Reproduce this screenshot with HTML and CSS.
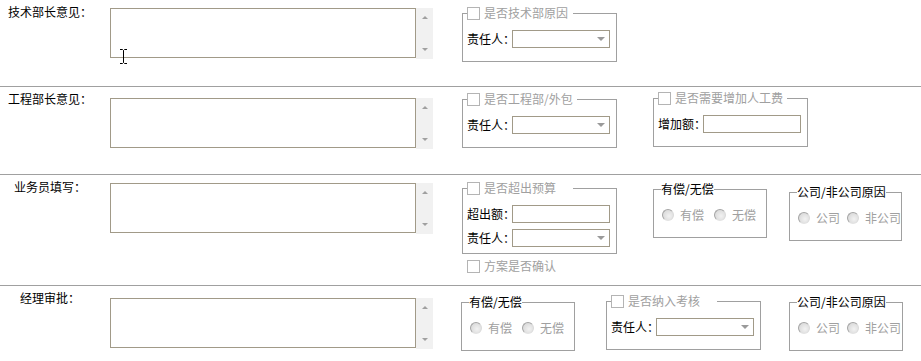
FILE: index.html
```html
<!DOCTYPE html>
<html lang="zh-CN">
<head>
    <meta charset="UTF-8">
    <title>审批意见</title>
    <link rel="stylesheet" href="styles.css">
</head>
<body>

    <!-- 技术部长 -->
    <div class="row r1">
        <div class="label">技术部长意见：</div>
        <div class="memo">
            <textarea></textarea>
            <div class="bar"><i class="up"></i><i class="down"></i></div>
        </div>
        <fieldset class="wide tech">
            <legend class="check"><label class="tick"><input type="checkbox" disabled>是否技术部原因</label></legend>
            <div class="line"><span class="key">责任人：</span><span class="pick"></span></div>
        </fieldset>
        <svg class="cursor" width="9" height="17" viewBox="0 0 9 17">
            <path d="M1 1.5H3.5L4.5 2.5L5.5 1.5H8M4.5 2.5V14.5M1 15.5H3.5L4.5 14.5L5.5 15.5H8" fill="none" stroke="#000" stroke-width="1"/>
        </svg>
    </div>

    <!-- 工程部长 -->
    <div class="row r2">
        <div class="label">工程部长意见：</div>
        <div class="memo">
            <textarea></textarea>
            <div class="bar"><i class="up"></i><i class="down"></i></div>
        </div>
        <fieldset class="wide eng">
            <legend class="check"><label class="tick"><input type="checkbox" disabled>是否工程部/外包</label></legend>
            <div class="line"><span class="key">责任人：</span><span class="pick"></span></div>
        </fieldset>
        <fieldset class="wide labor">
            <legend class="check"><label class="tick"><input type="checkbox" disabled>是否需要增加人工费</label></legend>
            <div class="line"><span class="key">增加额：</span><input class="field" type="text"></div>
        </fieldset>
    </div>

    <!-- 业务员 -->
    <div class="row r3">
        <div class="label">业务员填写：</div>
        <div class="memo">
            <textarea></textarea>
            <div class="bar"><i class="up"></i><i class="down"></i></div>
        </div>
        <div class="budget">
            <fieldset class="wide short">
                <legend class="check"><label class="tick"><input type="checkbox" disabled>是否超出预算</label></legend>
                <div class="line"><span class="key">超出额：</span><input class="field" type="text"></div>
                <div class="line"><span class="key">责任人：</span><span class="pick"></span></div>
            </fieldset>
            <label class="tick confirm"><input type="checkbox" disabled>方案是否确认</label>
        </div>
        <fieldset class="narrow pay">
            <legend class="plain">有偿/无偿</legend>
            <div class="opts">
                <label class="opt"><input type="radio" name="pay3" disabled>有偿</label>
                <label class="opt"><input type="radio" name="pay3" disabled>无偿</label>
            </div>
        </fieldset>
        <fieldset class="narrow cause">
            <legend class="plain">公司/非公司原因</legend>
            <div class="opts">
                <label class="opt"><input type="radio" name="cause3" disabled>公司</label>
                <label class="opt"><input type="radio" name="cause3" disabled>非公司</label>
            </div>
        </fieldset>
    </div>

    <!-- 经理 -->
    <div class="row r4">
        <div class="label">经理审批：</div>
        <div class="memo">
            <textarea></textarea>
            <div class="bar"><i class="up"></i><i class="down"></i></div>
        </div>
        <fieldset class="narrow pay">
            <legend class="plain">有偿/无偿</legend>
            <div class="opts">
                <label class="opt"><input type="radio" name="pay4" disabled>有偿</label>
                <label class="opt"><input type="radio" name="pay4" disabled>无偿</label>
            </div>
        </fieldset>
        <fieldset class="wide review">
            <legend class="check"><label class="tick"><input type="checkbox" disabled>是否纳入考核</label></legend>
            <div class="line"><span class="key">责任人：</span><span class="pick"></span></div>
        </fieldset>
        <fieldset class="narrow cause">
            <legend class="plain">公司/非公司原因</legend>
            <div class="opts">
                <label class="opt"><input type="radio" name="cause4" disabled>公司</label>
                <label class="opt"><input type="radio" name="cause4" disabled>非公司</label>
            </div>
        </fieldset>
    </div>

</body>
</html>
```
FILE: styles.css
```css
body {
    margin: 0;
    font-family: "Noto Sans CJK SC", "Noto Sans", sans-serif;
    font-size: 12px;
    line-height: 14px;
    color: #000;
    background: #fff;
}

/* rows */
.row {
    display: flex;
    align-items: flex-start;
    position: relative;
    border-bottom: 1px solid #a0a0a0;
}
.r1 { height: 86px; }
.r2 { height: 87px; }
.r3 { height: 110px; }
.r4 { height: 75px; border-bottom: none; }

.label {
    width: 100px;
    flex: none;
    margin-top: 5px;
    text-align: center;
    white-space: nowrap;
}

/* textarea + fake scrollbar */
.memo {
    display: flex;
    flex: none;
    margin-left: 10px;
}
.memo textarea {
    width: 306px;
    height: 50px;
    box-sizing: border-box;
    margin: 0;
    padding: 2px;
    border: 1px solid #a19a88;
    resize: none;
    outline: none;
    font: inherit;
    background: #fff;
}
.bar {
    width: 17px;
    height: 51px;
    box-sizing: border-box;
    padding: 8px 0 8px;
    background: #f1f1f1;
    display: flex;
    flex-direction: column;
    align-items: center;
    justify-content: space-between;
}
.bar i {
    display: block;
    width: 0;
    height: 0;
    border-left: 3px solid transparent;
    border-right: 3px solid transparent;
}
.bar .up { border-bottom: 3px solid #a0a0a0; }
.bar .down { border-top: 3px solid #a0a0a0; }

.r1 .memo { margin-top: 8px; }
.r2 .memo { margin-top: 11px; }
.r3 .memo { margin-top: 8px; }
.r4 .memo { margin-top: 12px; }

/* group boxes */
fieldset {
    flex: none;
    margin: 0;
    padding: 10px 4px 13px;
    border: 1px solid #a0a0a0;
    box-sizing: border-box;
    min-width: 0;
}
.wide { width: 155px; }
.narrow { width: 114px; padding-left: 8px; padding-right: 0; }

legend {
    padding: 0;
    height: 14px;
    line-height: 14px;
    font-size: 12px;
}
legend.check {
    min-width: 106px;
    box-sizing: border-box;
    padding-right: 4px;
    color: #a0a0a0;
}
legend.plain {
    margin-left: -1px;
    color: #000;
    white-space: nowrap;
}

.tick {
    display: flex;
    align-items: center;
    white-space: nowrap;
    color: #a0a0a0;
}
.tick input {
    appearance: none;
    width: 13px;
    height: 13px;
    margin: 0 4px 0 0;
    border: 1px solid #b4b4b4;
    background: #fff;
}

.line {
    display: flex;
    align-items: center;
    height: 18px;
}
.line + .line { margin-top: 6px; }
.key {
    width: 45px;
    flex: none;
    white-space: nowrap;
}
.field, .pick {
    width: 98px;
    height: 18px;
    box-sizing: border-box;
    margin: 0;
    border: 1px solid #a19a88;
    background: #fff;
}
.field {
    padding: 0 2px;
    font: inherit;
    outline: none;
}
.pick {
    display: flex;
    align-items: center;
    justify-content: flex-end;
    padding-right: 4px;
}
.pick::after {
    content: "";
    border-left: 4px solid transparent;
    border-right: 4px solid transparent;
    border-top: 4px solid #9a9a9a;
}

.opts {
    display: flex;
    align-items: center;
    height: 18px;
    gap: 10px;
}
.cause .opts { gap: 7px; }
.opt {
    display: flex;
    align-items: center;
    gap: 6px;
    color: #a0a0a0;
    white-space: nowrap;
}
.opt input {
    appearance: none;
    width: 12px;
    height: 12px;
    margin: 0;
    border-radius: 50%;
    border: 1px solid;
    border-color: #a4a4a4 #dadada #e2e2e2 #a4a4a4;
    background: radial-gradient(circle at 60% 60%, #f2f2f2, #d2d2d2);
}

.budget { flex: none; }
.confirm { margin: 5px 0 0 5px; line-height: 14px; }

/* placement of each box */
.tech { margin: 6px 0 0 29px; }
.eng { margin: 5px 0 0 29px; }
.labor { margin: 4px 0 0 36px; }

.budget { margin: 6px 0 0 29px; }
.short { padding-bottom: 6px; }
.r3 .pay { margin: 7px 0 0 36px; }
.r3 .cause { margin: 10px 0 0 22px; width: 113px; }

.r4 .pay { margin: 9px 0 0 28px; }
.review { margin: 8px 0 0 31px; }
.r4 .cause { margin: 9px 0 0 28px; }

/* mouse pointer caught in the shot */
.cursor {
    position: absolute;
    left: 119px;
    top: 48px;
}
```
